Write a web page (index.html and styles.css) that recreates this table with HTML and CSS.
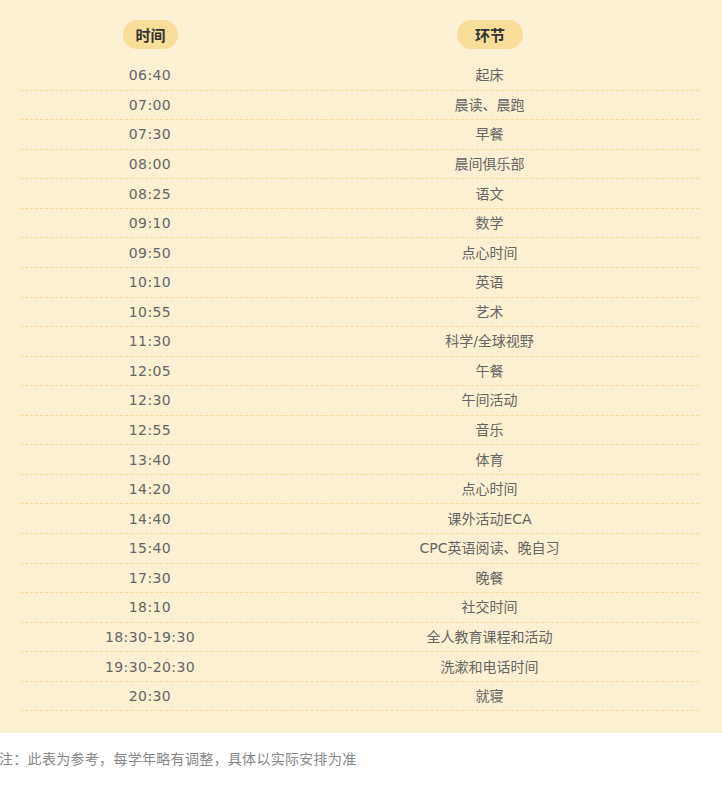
FILE: index.html
```html
<!DOCTYPE html>
<html lang="zh-CN">
<head>
<meta charset="utf-8">
<title>作息时间表</title>
<link rel="stylesheet" href="styles.css">
</head>
<body>
<div class="panel">
  <div class="table">
    <div class="head">
      <div class="cell"><span class="pill pill-time">时间</span></div>
      <div class="cell"><span class="pill pill-item">环节</span></div>
    </div>
    <div class="row"><div class="cell t">06:40</div><div class="cell">起床</div></div>
    <div class="row"><div class="cell t">07:00</div><div class="cell">晨读、晨跑</div></div>
    <div class="row"><div class="cell t">07:30</div><div class="cell">早餐</div></div>
    <div class="row"><div class="cell t">08:00</div><div class="cell">晨间俱乐部</div></div>
    <div class="row"><div class="cell t">08:25</div><div class="cell">语文</div></div>
    <div class="row"><div class="cell t">09:10</div><div class="cell">数学</div></div>
    <div class="row"><div class="cell t">09:50</div><div class="cell">点心时间</div></div>
    <div class="row"><div class="cell t">10:10</div><div class="cell">英语</div></div>
    <div class="row"><div class="cell t">10:55</div><div class="cell">艺术</div></div>
    <div class="row"><div class="cell t">11:30</div><div class="cell">科学/全球视野</div></div>
    <div class="row"><div class="cell t">12:05</div><div class="cell">午餐</div></div>
    <div class="row"><div class="cell t">12:30</div><div class="cell">午间活动</div></div>
    <div class="row"><div class="cell t">12:55</div><div class="cell">音乐</div></div>
    <div class="row"><div class="cell t">13:40</div><div class="cell">体育</div></div>
    <div class="row"><div class="cell t">14:20</div><div class="cell">点心时间</div></div>
    <div class="row"><div class="cell t">14:40</div><div class="cell">课外活动ECA</div></div>
    <div class="row"><div class="cell t">15:40</div><div class="cell">CPC英语阅读、晚自习</div></div>
    <div class="row"><div class="cell t">17:30</div><div class="cell">晚餐</div></div>
    <div class="row"><div class="cell t">18:10</div><div class="cell">社交时间</div></div>
    <div class="row"><div class="cell t">18:30-19:30</div><div class="cell">全人教育课程和活动</div></div>
    <div class="row"><div class="cell t">19:30-20:30</div><div class="cell">洗漱和电话时间</div></div>
    <div class="row"><div class="cell t">20:30</div><div class="cell">就寝</div></div>
  </div>
</div>
<p class="note">注：此表为参考，每学年略有调整，具体以实际安排为准</p>
</body>
</html>
```
FILE: styles.css
```css
html, body {
  margin: 0;
  padding: 0;
  background: #ffffff;
}
body {
  font-family: "DejaVu Sans", "Noto Sans CJK SC", sans-serif;
  font-size: 14px;
  color: #666666;
}
.panel {
  background: #fcf0d2;
  padding: 20px 23px 21.5px 20px;
}
.table {
  display: flex;
  flex-direction: column;
}
.head,
.row {
  display: grid;
  grid-template-columns: 260px 1fr;
}
.head {
  padding-bottom: 12px;
}
.cell {
  display: flex;
  align-items: center;
  justify-content: center;
}
.row {
  box-sizing: border-box;
  height: 29.57px;
  border-bottom: 1px dashed #f7da8b;
}
.row .cell {
  line-height: 20px;
}
.t {
  letter-spacing: 0.4px;
}
.pill {
  display: inline-block;
  height: 29px;
  line-height: 29px;
  border-radius: 15px;
  background: #f9de9a;
  color: #333333;
  font-weight: bold;
  font-family: "Noto Sans CJK SC", sans-serif;
  font-size: 15px;
}
.pill-time {
  padding: 0 12px;
  margin-left: 1px;
}
.pill-item {
  padding: 0 18px;
  margin-left: 1px;
}
.note {
  margin: 15px 0 0 -1px;
  line-height: 20px;
  font-family: "Noto Sans CJK SC", sans-serif;
  font-size: 14px;
  color: #888888;
  letter-spacing: 0.3px;
}
```
